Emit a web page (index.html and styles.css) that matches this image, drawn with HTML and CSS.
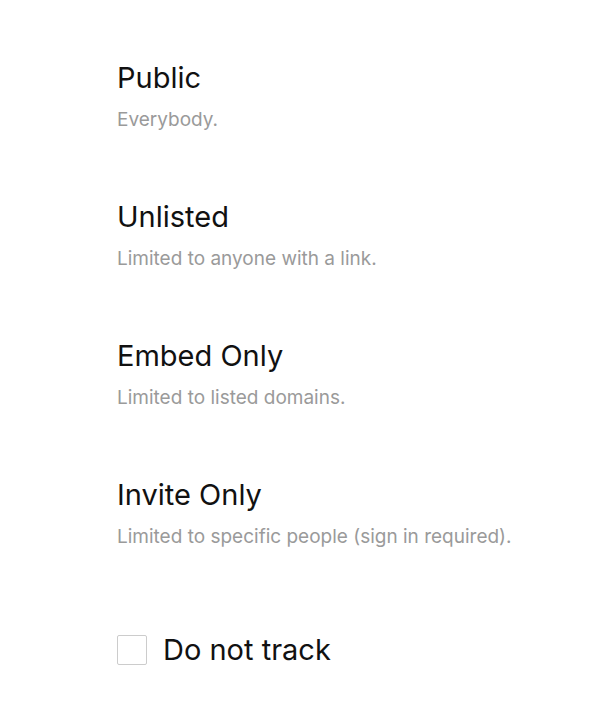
FILE: index.html
```html
<!DOCTYPE html>
<html>
<head>
<meta charset="utf-8">
<link rel="stylesheet" href="styles.css">
</head>
<body>
<div class="options">
  <div class="option">
    <div class="title">Public</div>
    <div class="desc">Everybody.</div>
  </div>
  <div class="option">
    <div class="title">Unlisted</div>
    <div class="desc">Limited to anyone with a link.</div>
  </div>
  <div class="option">
    <div class="title">Embed Only</div>
    <div class="desc">Limited to listed domains.</div>
  </div>
  <div class="option">
    <div class="title">Invite Only</div>
    <div class="desc">Limited to specific people (sign in required).</div>
  </div>
  <label class="track">
    <span class="box"></span>
    <span class="track-label">Do not track</span>
  </label>
</div>
</body>
</html>
```
FILE: styles.css
```css
html, body {
  margin: 0;
  background: #fff;
}
body {
  font-family: "Inter", "Liberation Sans", sans-serif;
  color: #111;
}
.options {
  padding: 58px 0 0 117px;
  display: flex;
  flex-direction: column;
}
.option {
  display: flex;
  flex-direction: column;
  gap: 10px;
  margin-bottom: 65px;
}
.title {
  font-size: 29px;
  line-height: 40px;
  color: #111;
}
.desc {
  font-size: 19px;
  line-height: 24px;
  color: #9a9a9a;
}
.track {
  display: flex;
  align-items: center;
  gap: 16px;
  margin-top: 16px;
  height: 40px;
}
.box {
  width: 28px;
  height: 28px;
  border: 1.5px solid #ccc;
  border-radius: 2px;
}
.track-label {
  font-size: 29px;
  line-height: 40px;
}
```
